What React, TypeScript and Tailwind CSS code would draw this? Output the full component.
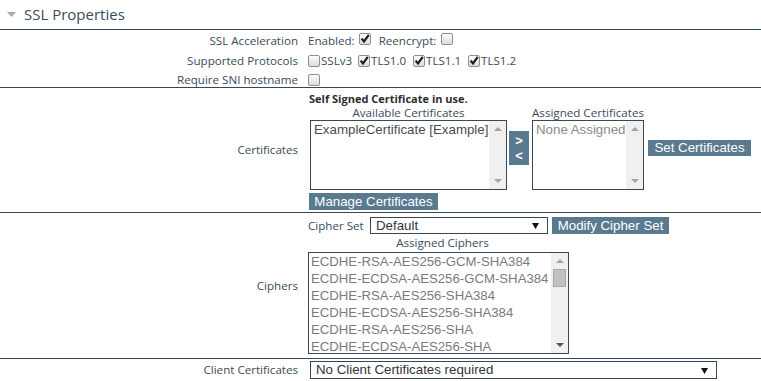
import React from "react";

const LABEL = "text-[11.6px] text-[#3c4b5a]";
const ARIAL = { fontFamily: '"Liberation Sans", Arial, sans-serif' };

function Cb({ checked }: { checked?: boolean }) {
  return (
    <span className="relative inline-block w-[12px] h-[12px] rounded-[2px] border border-[#8e8f8f] bg-linear-to-b from-[#fdfdfd] to-[#dcdcdc] shrink-0">
      {checked && (
        <svg className="absolute left-[0px] top-[0px]" width="10" height="10" viewBox="0 0 10 10">
          <path d="M1.6 4.6 L4 7.4 L8.8 0.8" stroke="#1e1e1e" strokeWidth="2.2" fill="none" />
        </svg>
      )}
    </span>
  );
}

function Scroll({ thumb, downDark }: { thumb?: boolean; downDark?: boolean }) {
  return (
    <div className="relative w-[17px] h-full bg-[#f0f0f0] flex flex-col justify-between items-center py-[6px] shrink-0">
      <svg width="8" height="4" viewBox="0 0 8 4">
        <path d="M0 4 L4 0 L8 4 Z" fill="#a3a3a3" />
      </svg>
      {thumb && (
        <div className="absolute left-[2px] top-[16px] w-[13px] h-[18px] bg-[#c1c1c1] border border-[#a9a9a9]" />
      )}
      <svg width="8" height="4" viewBox="0 0 8 4">
        <path d="M0 0 L8 0 L4 4 Z" fill={downDark ? "#505050" : "#a3a3a3"} />
      </svg>
    </div>
  );
}

function Btn({ children, className = "" }: { children: React.ReactNode; className?: string }) {
  return (
    <div
      className={`bg-[#5a7a90] text-white text-[13.3px] leading-none flex items-center justify-center px-[5px] whitespace-nowrap ${className}`}
      style={ARIAL}
    >
      {children}
    </div>
  );
}

function Select({ text, className = "" }: { text: string; className?: string }) {
  return (
    <div
      className={`border border-[#3a4755] bg-white flex items-center justify-between pl-[5px] pr-[8px] text-[13.3px] text-[#333] ${className}`}
      style={ARIAL}
    >
      <span>{text}</span>
      <svg width="7" height="7" viewBox="0 0 7 7">
        <path d="M0 1 L7 1 L3.5 7 Z" fill="#111" />
      </svg>
    </div>
  );
}

const ciphers = [
  "ECDHE-RSA-AES256-GCM-SHA384",
  "ECDHE-ECDSA-AES256-GCM-SHA384",
  "ECDHE-RSA-AES256-SHA384",
  "ECDHE-ECDSA-AES256-SHA384",
  "ECDHE-RSA-AES256-SHA",
  "ECDHE-ECDSA-AES256-SHA",
];

export default function App() {
  return (
    <div
      className="w-[761px] h-[381px] bg-white overflow-hidden"
      style={{ fontFamily: '"Open Sans", "Noto Sans", sans-serif' }}
    >
      {/* Header */}
      <div className="h-[30px] flex items-center border-b border-[#34495e]">
        <svg className="ml-[7px]" width="9" height="5" viewBox="0 0 9 5">
          <path d="M0 0 L9 0 L4.5 5 Z" fill="#a9a9a9" />
        </svg>
        <span className="ml-[8px] text-[15px] text-[#3b4b5b] leading-none">SSL Properties</span>
      </div>

      {/* Section 1 */}
      <div className="border-b border-[#3a4755] pt-[1px] h-[58px]">
        <div className="grid grid-cols-[298px_1fr] gap-x-[10px]">
          <div className={`${LABEL} h-[20px] flex items-center justify-end`}>SSL Acceleration</div>
          <div className={`${LABEL} h-[20px] flex items-center`}>
            <span>Enabled:</span>
            <span className="ml-[4px]"><Cb checked /></span>
            <span className="ml-[8px]">Reencrypt:</span>
            <span className="ml-[5px]"><Cb /></span>
          </div>

          <div className={`${LABEL} h-[20px] flex items-center justify-end`}>Supported Protocols</div>
          <div className={`${LABEL} h-[20px] flex items-center`}>
            <span className="w-[50px] flex items-center"><Cb /><span className="ml-[1px]">SSLv3</span></span>
            <span className="w-[55px] flex items-center"><Cb checked /><span className="ml-[1px]">TLS1.0</span></span>
            <span className="w-[55px] flex items-center"><Cb checked /><span className="ml-[1px]">TLS1.1</span></span>
            <span className="flex items-center"><Cb checked /><span className="ml-[1px]">TLS1.2</span></span>
          </div>

          <div className={`${LABEL} h-[17px] flex items-center justify-end`}>Require SNI hostname</div>
          <div className="h-[17px] flex items-center">
            <Cb />
          </div>
        </div>
      </div>

      {/* Section 2: certificates */}
      <div className="border-b border-[#3a4755] grid grid-cols-[298px_1fr] gap-x-[10px] h-[125px]">
        <div className={`${LABEL} flex items-center justify-end`}>Certificates</div>
        <div className="flex flex-col pt-[4px]">
          <div className="text-[11px] font-bold text-[#2d2d2d] leading-[14px] ml-[1px]">
            Self Signed Certificate in use.
          </div>
          <div className="flex items-center">
            <div className="flex flex-col ml-[2px] w-[197px]">
              <div className={`${LABEL} leading-[14px] text-center`}>Available Certificates</div>
              <div className="h-[70px] border border-[#3a4755] flex">
                <div className="flex-1 pl-[3px] text-[13.3px] leading-[17px] text-[#4d4d4d]" style={ARIAL}>
                  ExampleCertificate [Example]
                </div>
                <Scroll />
              </div>
            </div>
            <div className="ml-[2px] w-[20px] h-[34px] bg-[#5a7a90] text-white text-[13px] font-bold flex flex-col items-center justify-center leading-[15px]" style={ARIAL}>
              <span>&gt;</span>
              <span>&lt;</span>
            </div>
            <div className="flex flex-col ml-[3px] w-[112px]">
              <div className={`${LABEL} leading-[14px] text-center whitespace-nowrap`}>Assigned Certificates</div>
              <div className="h-[70px] border border-[#3a4755] flex">
                <div className="flex-1 pl-[3px] text-[13.3px] leading-[17px] text-[#8a8a8a] whitespace-nowrap overflow-hidden" style={ARIAL}>
                  None Assigned
                </div>
                <Scroll />
              </div>
            </div>
            <Btn className="ml-[4px] h-[16px] w-[103px]">Set Certificates</Btn>
          </div>
          <Btn className="mt-[3px] ml-[1px] h-[17px] w-[129px]">Manage Certificates</Btn>
        </div>
      </div>

      {/* Section 3: ciphers */}
      <div className="border-b border-[#3a4755] grid grid-cols-[298px_1fr] gap-x-[10px] h-[146px]">
        <div className={`${LABEL} flex items-center justify-end`}>Ciphers</div>
        <div className="flex flex-col pt-[4px]">
          <div className="flex items-center h-[17px]">
            <span className={`${LABEL} w-[56px]`}>Cipher Set</span>
            <Select text="Default" className="ml-[6px] w-[178px] h-[17px]" />
            <Btn className="ml-[4px] h-[17px] w-[117px]">Modify Cipher Set</Btn>
          </div>
          <div className={`${LABEL} w-[261px] pl-[8px] text-center leading-[18px] h-[18px]`}>Assigned Ciphers</div>
          <div className="w-[261px] h-[102px] border border-[#3a4755] flex overflow-hidden">
            <div className="flex-1 pl-[2px] text-[13.2px] leading-[17px] text-[#7b7b7b] whitespace-nowrap overflow-hidden" style={ARIAL}>
              {ciphers.map((c) => (
                <div key={c} className="h-[17px]">{c}</div>
              ))}
            </div>
            <Scroll thumb downDark />
          </div>
        </div>
      </div>

      {/* Section 4 */}
      <div className="grid grid-cols-[298px_1fr] gap-x-[10px] h-[22px] items-center">
        <div className={`${LABEL} text-right`}>Client Certificates</div>
        <Select text="No Client Certificates required" className="ml-[2px] w-[407px] h-[18px]" />
      </div>
    </div>
  );
}
